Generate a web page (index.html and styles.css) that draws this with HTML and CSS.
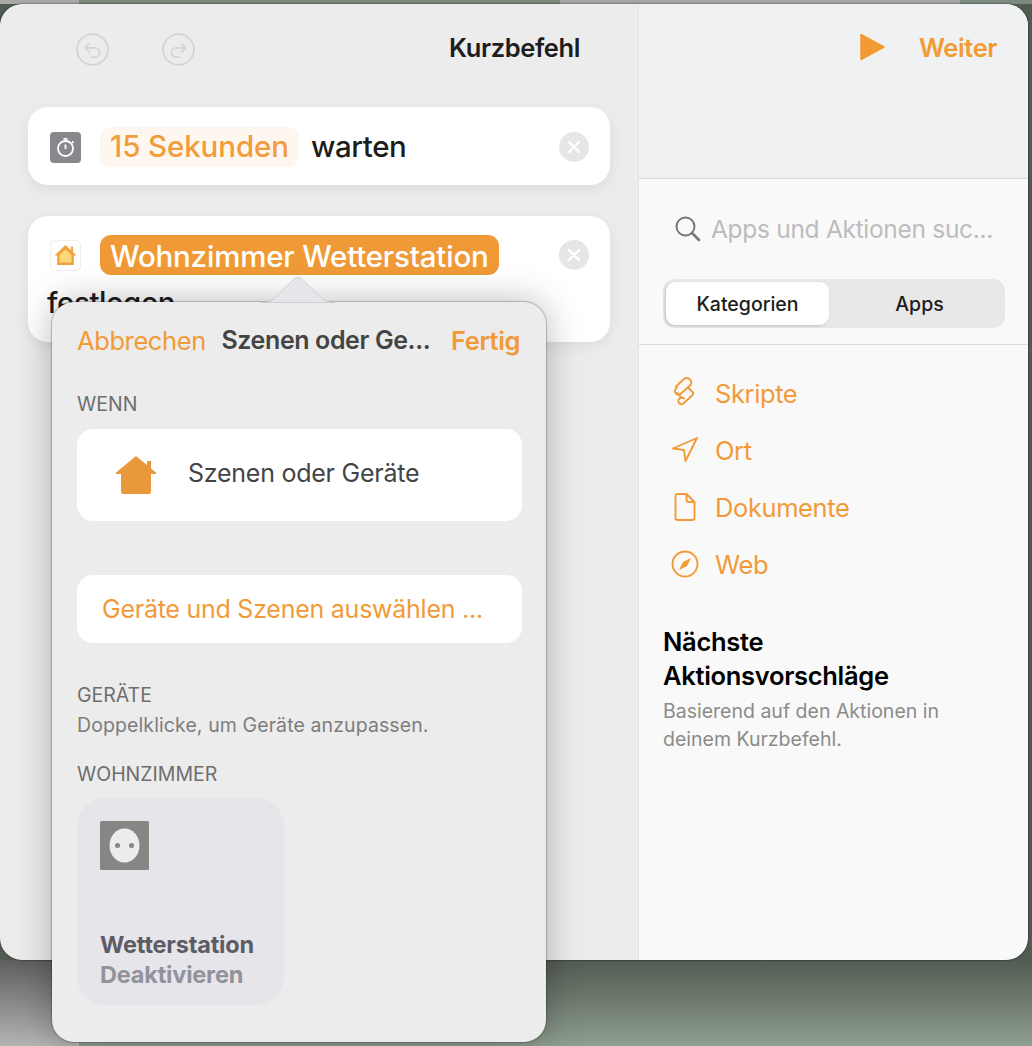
FILE: index.html
```html
<!DOCTYPE html>
<html lang="de">
<head>
  <meta charset="UTF-8" />
  <title>Kurzbefehl</title>
  <link rel="stylesheet" href="styles.css">
</head>
<body>
  <div class="fenster">
    <main class="links">
      <header class="kopf">
        <svg class="rund" viewBox="0 0 32 32"><circle cx="16" cy="16" r="15"/><path d="M13 10.500L9 14.500l4 4M9 14.500h9.500a4.500 4.500 0 0 1 0 9H15"/></svg>
        <svg class="rund rund-2" viewBox="0 0 32 32"><circle cx="16" cy="16" r="15"/><path d="M19 10.500l4 4-4 4M23 14.500h-9.500a4.500 4.500 0 0 0 0 9H17"/></svg>
        <h1 class="titel">Kurzbefehl</h1>
      </header>

      <section class="karte">
        <div class="zeile">
          <svg class="app" viewBox="0 0 31 31"><rect width="31" height="31" rx="4" fill="#87878c"/><circle cx="15.500" cy="16.500" r="7.500" fill="none" stroke="#fff" stroke-width="1.800"/><path d="M15.500 12.500v4.500M13.500 6.800h4M22 9.500l1.500 1.500" stroke="#fff" stroke-width="1.800" fill="none"/></svg>
          <span class="pille pille-hell">15 Sekunden</span>
          <span class="wort">warten</span>
          <svg class="schliessen" viewBox="0 0 30 30"><circle cx="15" cy="15" r="15" fill="#e6e6e6"/><path d="M10 10l10 10M20 10L10 20" stroke="#fff" stroke-width="2.400" stroke-linecap="round"/></svg>
        </div>
      </section>

      <section class="karte karte-hoch">
        <div class="zeile">
          <svg class="app app-rand" viewBox="0 0 31 31"><rect x=".5" y=".5" width="30" height="30" rx="4" fill="#fff" stroke="#eee"/><path d="M15.500 5L4.500 15.500h2.700v9.500h16.600v-9.500h2.700l-3.500-3.400V6.500h-2v3.700z" fill="#f0a23c"/><path d="M15.500 9.500l-6 5.500v7.500h12V15z" fill="#fbd77c"/></svg>
          <span class="pille pille-voll">Wohnzimmer Wetterstation</span>
          <svg class="schliessen" viewBox="0 0 30 30"><circle cx="15" cy="15" r="15" fill="#e6e6e6"/><path d="M10 10l10 10M20 10L10 20" stroke="#fff" stroke-width="2.400" stroke-linecap="round"/></svg>
        </div>
        <div class="wort wort-unten">festlegen</div>
      </section>
    </main>

    <aside class="rechts">
      <div class="rechts-kopf">
        <svg class="play" viewBox="0 0 25 28"><path d="M1 1.500L24 14 1 26.500z" fill="#f29a33" stroke="#f29a33" stroke-width="1.500" stroke-linejoin="round"/></svg>
        <span class="weiter">Weiter</span>
      </div>
      <div class="suche">
        <svg class="lupe" viewBox="0 0 26 26"><circle cx="10.500" cy="10.500" r="9" fill="none" stroke="#777" stroke-width="2"/><path d="M17 17l7 7" stroke="#777" stroke-width="2.600" stroke-linecap="round"/></svg>
        <span class="suche-text">Apps und Aktionen suc...</span>
      </div>
      <div class="segmente">
        <span class="segment segment-an">Kategorien</span>
        <span class="segment segment-aus">Apps</span>
      </div>
      <ul class="liste">
        <li class="eintrag">
          <svg class="symbol" viewBox="6 5 28 32"><path d="M11 14.500L19 7a4.500 4.500 0 0 1 6.500 6L16 21.500a3.500 3.500 0 0 1-5-5l1-1M23 15.500l4.500 4.500a2 2 0 0 1 0 3L19 31a3.200 3.200 0 1 1-4.500-4.500 3.200 3.200 0 0 1 4.500 0M12 21l5 5"/></svg>
          Skripte
        </li>
        <li class="eintrag">
          <svg class="symbol" viewBox="0 0 28 28"><path d="M26 2L2 12.500l11 1.500 1.500 11z"/></svg>
          Ort
        </li>
        <li class="eintrag">
          <svg class="symbol" viewBox="0 0 28 28"><path d="M15.500 1H6.500a2 2 0 0 0-2 2v22a2 2 0 0 0 2 2h15a2 2 0 0 0 2-2V9zM15.500 1v6a2 2 0 0 0 2 2h6"/></svg>
          Dokumente
        </li>
        <li class="eintrag">
          <svg class="symbol" viewBox="0 0 28 28"><circle cx="14" cy="14" r="12.500"/><path d="M20 8l-8 4-4 8 8-4z" class="voll"/></svg>
          Web
        </li>
      </ul>
      <h2 class="vorschlag">Nächste Aktionsvorschläge</h2>
      <p class="vorschlag-text">Basierend auf den Aktionen in deinem Kurzbefehl.</p>
    </aside>
  </div>

  <div class="popover">
    <svg class="spitze" viewBox="0 0 74 26"><path d="M0 25.500c8 0 12-2 16-7L33 2c2-2 6-2 8 0l17 16.500c4 5 8 7 16 7z" fill="#e6e7ea" stroke="#c9c9c9" stroke-width=".8"/></svg>
    <div class="pop-kopf">
      <span class="pop-link">Abbrechen</span>
      <span class="pop-titel">Szenen oder Ge...</span>
      <span class="pop-fertig">Fertig</span>
    </div>
    <div class="abschnitt">WENN</div>
    <div class="weiss weiss-szene">
      <svg class="haus" viewBox="0 0 42 38"><path d="M21 0L1 16.500v1.500h5v18a2 2 0 0 0 2 2h26a2 2 0 0 0 2-2V18h5v-1.500l-5-4V5h-4v4z" fill="#ea983c"/></svg>
      <span class="szene-text">Szenen oder Geräte</span>
    </div>
    <div class="weiss weiss-knopf">Geräte und Szenen auswählen ...</div>
    <div class="abschnitt abschnitt-geraete">GERÄTE</div>
    <div class="hinweis">Doppelklicke, um Geräte anzupassen.</div>
    <div class="abschnitt abschnitt-raum">WOHNZIMMER</div>
    <div class="kachel">
      <svg class="dose" viewBox="0 0 49 49"><rect width="49" height="49" rx="1.500" fill="#858784"/><ellipse cx="24.500" cy="24.500" rx="15" ry="17" fill="#ececec"/><circle cx="17.500" cy="24.500" r="2.500" fill="#858784"/><circle cx="31.500" cy="24.500" r="2.500" fill="#858784"/></svg>
      <div class="kachel-name">Wetterstation</div>
      <div class="kachel-status">Deaktivieren</div>
    </div>
  </div>
</body>
</html>
```

FILE: styles.css
```css
* { box-sizing: border-box; }
body {
  margin: 0;
  width: 1032px;
  height: 1046px;
  overflow: hidden;
  position: relative;
  padding-top: 4px;
  font-family: Inter, "Liberation Sans", sans-serif;
  background:
    linear-gradient(90deg, #a8a8a8 0 79px, #7c897e 79px 560px, #a5a5a5 560px 960px, #7c897e 960px) top left / 100% 4px no-repeat,
    linear-gradient(180deg, #5e5e5e 0, #b4b4b4 100%) bottom left / 79px 86px no-repeat,
    linear-gradient(180deg, #525b52 960px, #8e9e8f 1046px);
}
.fenster {
  width: 1028px;
  height: 956px;
  display: flex;
  border-radius: 22px;
  box-shadow: 0 0 2px rgba(0,0,0,.8);
  overflow: hidden;
}
.links {
  width: 639px;
  background: #ececec;
  border-right: 1px solid #e2e2e2;
  padding: 0 28px;
}
.kopf {
  height: 103px;
  display: flex;
  align-items: center;
  padding: 0 30px 12px 48px;
}
.rund {
  width: 33px;
  height: 33px;
  fill: none;
  stroke: #d4d4d4;
  stroke-width: 1.700;
  stroke-linecap: round;
  stroke-linejoin: round;
}
.rund-2 { margin-left: 53px; }
.titel {
  margin: -4px 0 0 auto;
  font-size: 25.500px;
  font-weight: 600;
  letter-spacing: -.4px;
  color: #1d1d1d;
}
.karte {
  background: #fff;
  border-radius: 20px;
  height: 78px;
  padding: 20px 21px 0 22px;
  margin-bottom: 31px;
  box-shadow: 0 4px 14px rgba(0,0,0,.07);
}
.karte-hoch { height: 126px; padding-top: 19px; }
.zeile {
  display: flex;
  align-items: center;
  height: 40px;
}
.app { width: 31px; height: 31px; flex: none; }
.pille {
  margin-left: 19px;
  height: 40px;
  padding: 0 10px;
  border-radius: 11px;
  font-size: 29.500px;
  font-weight: 500;
  letter-spacing: -.1px;
  line-height: 39px;
}
.pille-hell { background: #fef7f0; color: #f29c3b; }
.pille-voll { background: #f09a37; color: #fff; line-height: 42px; letter-spacing: -.2px; }
.wort {
  font-size: 29.500px;
  font-weight: 500;
  letter-spacing: -.4px;
  color: #1c1c1c;
  margin: -2px 0 0 12px;
}
.wort-unten { margin: 9px 0 0 -3px; line-height: 36px; }
.schliessen {
  margin-left: auto;
  width: 30px;
  height: 30px;
  flex: none;
}
.rechts {
  flex: 1;
  background: #f9f9f9;
}
.rechts-kopf {
  height: 175px;
  background: #f0f1f3;
  border-bottom: 1px solid #d9d9d9;
  display: flex;
  align-items: flex-start;
  padding: 29px 30px 0 221px;
}
.play { width: 25px; height: 28px; flex: none; }
.weiter {
  margin-left: 34px;
  font-size: 25.500px;
  font-weight: 600;
  letter-spacing: -.4px;
  color: #f29a33;
  line-height: 30px;
}
.suche {
  display: flex;
  align-items: center;
  padding: 15px 0 0 36px;
  height: 85px;
}
.lupe { width: 26px; height: 26px; flex: none; }
.suche-text {
  margin-left: 10px;
  font-size: 24.500px;
  letter-spacing: -.3px;
  color: #bcbcbc;
  white-space: nowrap;
}
.segmente {
  margin: 15px 0 0 24px;
  width: 342px;
  height: 49px;
  padding: 3px;
  background: #e8e8e8;
  border-radius: 12px;
  display: flex;
}
.segment {
  flex: 1;
  text-align: center;
  font-size: 19.500px;
  font-weight: 500;
  line-height: 44px;
  color: #1c1c1c;
}
.segment-aus { padding-left: 8px; }
.segment-an {
  flex: none;
  width: 163px;
  background: #fff;
  border-radius: 9px;
  box-shadow: -1px 1px 3px rgba(0,0,0,.18);
}
.liste {
  list-style: none;
  margin: 16px 0 0;
  padding: 30px 0 0 24px;
  border-top: 1px solid #dcdcdc;
  display: flex;
  flex-direction: column;
  gap: 21px;
}
.eintrag {
  display: flex;
  align-items: center;
  height: 36px;
  font-size: 25.500px;
  letter-spacing: -.4px;
  color: #f29a38;
}
.symbol {
  width: 28px;
  height: 32px;
  margin-right: 16px;
  margin-left: 8px;
  fill: none;
  stroke: #f29a38;
  stroke-width: 1.900;
  stroke-linejoin: round;
  stroke-linecap: round;
}
.symbol .voll { fill: #f29a38; stroke: none; }
.vorschlag {
  margin: 43px 0 0 24px;
  width: 300px;
  font-size: 25.500px;
  font-weight: 600;
  line-height: 34px;
  letter-spacing: -.3px;
  color: #000;
}
.vorschlag-text {
  margin: 4px 0 0 24px;
  width: 320px;
  font-size: 19.500px;
  line-height: 28px;
  color: #8b8b8b;
}
.popover {
  position: absolute;
  left: 52px;
  top: 302px;
  width: 494px;
  height: 740px;
  padding: 0 24px 0 25px;
  background: #ececec;
  border-radius: 22px;
  box-shadow: 0 0 1px 1px rgba(0,0,0,.22), 0 0 36px rgba(0,0,0,.28);
}
.spitze {
  position: absolute;
  left: 209px;
  top: -25px;
  width: 74px;
  height: 26px;
}
.pop-kopf {
  display: flex;
  align-items: center;
  justify-content: space-between;
  height: 76px;
  margin-bottom: 14px;
  padding-right: 2px;
  font-size: 25.500px;
  letter-spacing: -.4px;
}
.pop-link { color: #f29a38; }
.pop-titel { font-size: 25px; font-weight: 600; color: #444; margin-right: 5px; }
.pop-fertig { font-weight: 600; color: #f29a38; }
.abschnitt {
  font-size: 19.500px;
  line-height: 24px;
  color: #6e6e6e;
}
.weiss {
  background: #fff;
  border-radius: 16px;
  font-size: 25px;
  letter-spacing: -.25px;
}
.weiss-szene {
  margin-top: 13px;
  height: 92px;
  display: flex;
  align-items: center;
  padding-left: 38px;
  color: #444;
}
.szene-text { margin-bottom: 4px; }
.haus { width: 42px; height: 38px; margin-right: 31px; }
.weiss-knopf {
  margin-top: 54px;
  height: 68px;
  line-height: 68px;
  padding-left: 25px;
  color: #f29a38;
}
.abschnitt-geraete { margin-top: 40px; }
.hinweis {
  font-size: 19.500px;
  line-height: 28px;
  letter-spacing: .1px;
  margin-top: 4px;
  color: #7d7d7d;
}
.abschnitt-raum { margin-top: 23px; }
.kachel {
  margin-top: 12px;
  width: 207px;
  height: 207px;
  border-radius: 28px;
  background: #e5e5ea;
  padding: 23px 23px 0;
}
.dose { width: 49px; height: 49px; display: block; }
.kachel-name {
  margin-top: 60px;
  font-size: 23.500px;
  font-weight: 700;
  letter-spacing: -.2px;
  line-height: 30px;
  color: #5c5c66;
}
.kachel-status {
  font-size: 23.500px;
  font-weight: 700;
  letter-spacing: -.2px;
  line-height: 29px;
  color: #92929a;
}
```
